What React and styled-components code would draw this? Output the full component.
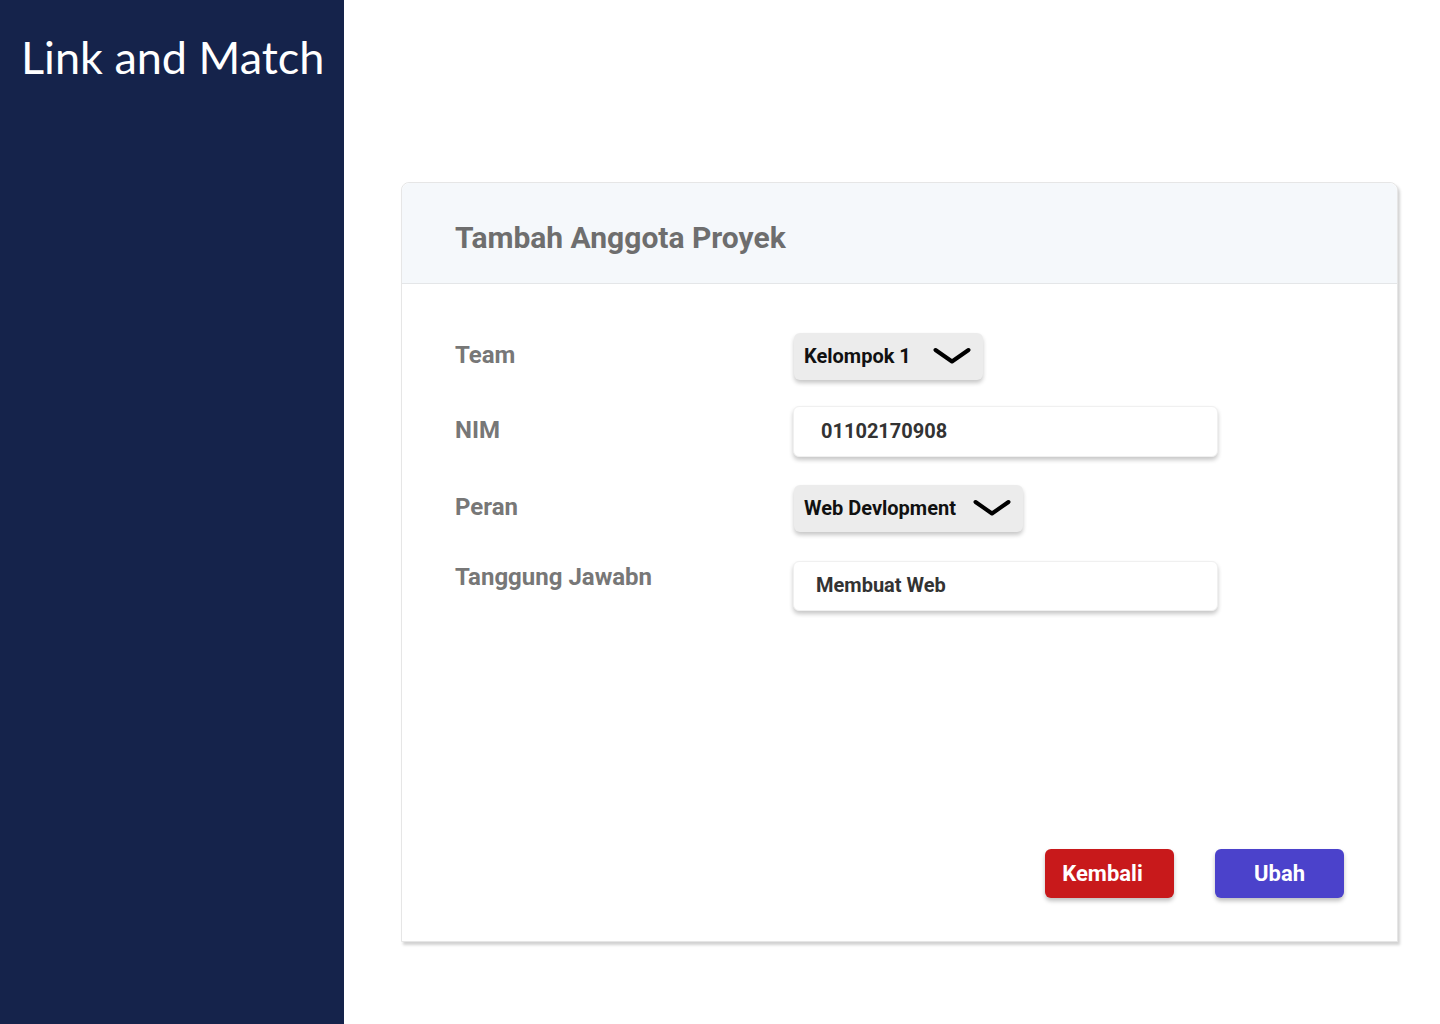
import React from "react";
import styled, { createGlobalStyle } from "styled-components";

const GlobalStyle = createGlobalStyle`
  html, body { margin: 0; padding: 0; background: #ffffff; }
  body { font-family: Roboto, "Liberation Sans", sans-serif; }
  * { box-sizing: border-box; }
`;

const Page = styled.div`
  display: flex;
  width: 1440px;
  height: 1024px;
  overflow: hidden;
`;

const Sidebar = styled.aside`
  width: 344px;
  flex-shrink: 0;
  background: #15234b;
  padding: 29px 0 0 21px;
`;

const Brand = styled.h1`
  margin: 0;
  font-family: Lato, "Open Sans", sans-serif;
  font-weight: 400;
  font-size: 45px;
  line-height: 56px;
  color: #ffffff;
`;

const Main = styled.main`
  flex: 1;
  padding: 182px 0 0 57px;
`;

const Card = styled.section`
  width: 997px;
  height: 760px;
  background: #ffffff;
  border: 1px solid #e6e6e6;
  border-radius: 8px 8px 0 0;
  box-shadow: 2px 3px 3px rgba(0, 0, 0, 0.18);
  display: flex;
  flex-direction: column;
`;

const CardHeader = styled.header`
  height: 101px;
  background: #f5f8fb;
  border-bottom: 1px solid #e4e6e8;
  border-radius: 8px 8px 0 0;
  display: flex;
  align-items: center;
  padding: 8px 0 0 53px;
`;

const Title = styled.h2`
  margin: 0;
  font-size: 30px;
  font-weight: 700;
  color: #6e6e6e;
`;

const Form = styled.div`
  flex: 1;
  padding: 49px 0 0 53px;
  display: flex;
  flex-direction: column;
`;

const Row = styled.div`
  display: grid;
  grid-template-columns: 338px 1fr;
  align-items: ${(p) => (p.$top ? "start" : "center")};
  margin-bottom: ${(p) => p.$gap || 0}px;
`;

const Label = styled.label`
  font-size: 24px;
  font-weight: 700;
  color: #777777;
  padding-top: ${(p) => p.$offset || 0}px;
  padding-bottom: ${(p) => (p.$offset ? 0 : 4)}px;
`;

const Select = styled.div`
  justify-self: start;
  height: 47px;
  margin-left: 1px;
  display: flex;
  align-items: center;
  gap: ${(p) => p.$gap}px;
  padding: 0 12px 2px 10px;
  background: #ececec;
  border-radius: 6px;
  box-shadow: 0 3px 4px rgba(0, 0, 0, 0.22);
  font-size: 20px;
  font-weight: 700;
  color: #111111;
`;

const Input = styled.div`
  width: 425px;
  height: ${(p) => p.$h}px;
  display: flex;
  align-items: center;
  padding-left: ${(p) => p.$pad}px;
  padding-bottom: 2px;
  background: #ffffff;
  border: 1px solid #f0f0f0;
  border-radius: 6px;
  box-shadow: 0 3px 4px rgba(0, 0, 0, 0.22);
  font-size: 20px;
  font-weight: 700;
  color: #333333;
`;

const Footer = styled.footer`
  display: flex;
  justify-content: flex-end;
  gap: 41px;
  padding: 0 53px 43px 0;
`;

const Button = styled.button`
  width: 129px;
  height: 49px;
  border: none;
  border-radius: 6px;
  padding: 0 ${(p) => p.$shift || 0}px 0 0;
  background: ${(p) => p.$bg};
  color: #ffffff;
  font-family: Roboto, "Liberation Sans", sans-serif;
  font-size: 22px;
  font-weight: 700;
  box-shadow: 0 3px 4px rgba(0, 0, 0, 0.25);
  cursor: pointer;
`;

const Chevron = () => (
  <svg width="38" height="18" viewBox="0 0 38 18" fill="none">
    <path
      d="M2.5 3 L19 14.5 L35.5 3"
      stroke="#000"
      strokeWidth="4"
      strokeLinecap="round"
      strokeLinejoin="round"
    />
  </svg>
);

export default function App() {
  return (
    <>
      <GlobalStyle />
      <Page>
        <Sidebar>
          <Brand>Link and Match</Brand>
        </Sidebar>
        <Main>
          <Card>
            <CardHeader>
              <Title>Tambah Anggota Proyek</Title>
            </CardHeader>
            <Form>
              <Row $gap={26}>
                <Label>Team</Label>
                <Select $gap={22}>
                  Kelompok 1
                  <Chevron />
                </Select>
              </Row>
              <Row $gap={28}>
                <Label>NIM</Label>
                <Input $h={51} $pad={27}>01102170908</Input>
              </Row>
              <Row $gap={29}>
                <Label>Peran</Label>
                <Select $gap={17}>
                  Web Devlopment
                  <Chevron />
                </Select>
              </Row>
              <Row $top>
                <Label $offset={2}>Tanggung Jawabn</Label>
                <Input $h={50} $pad={22}>Membuat Web</Input>
              </Row>
            </Form>
            <Footer>
              <Button $bg="#c8191b" $shift={14}>Kembali</Button>
              <Button $bg="#4b42cb">Ubah</Button>
            </Footer>
          </Card>
        </Main>
      </Page>
    </>
  );
}
